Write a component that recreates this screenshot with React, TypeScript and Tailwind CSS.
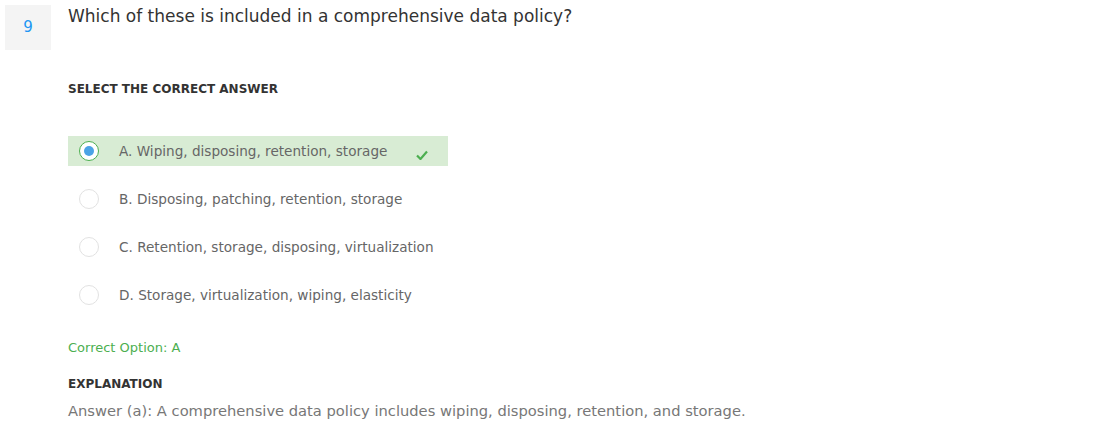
import React from 'react';

const OPTIONS = [
  { key: 'A', text: 'Wiping, disposing, retention, storage', correct: true },
  { key: 'B', text: 'Disposing, patching, retention, storage', correct: false },
  { key: 'C', text: 'Retention, storage, disposing, virtualization', correct: false },
  { key: 'D', text: 'Storage, virtualization, wiping, elasticity', correct: false },
];

export default function App() {
  return (
    <div className="w-[1111px] h-[433px] bg-white flex items-start gap-[17px] pl-[5px] pt-[5px] font-['DejaVu_Sans',sans-serif]">
      <div className="w-[46px] h-[45px] bg-[#f4f4f4] flex items-center justify-center text-[15px] text-[#2196f3] shrink-0">
        9
      </div>
      <div className="flex flex-col">
        <h2 className="text-[17px] leading-[24px] text-[#333] -mt-[1px]">
          Which of these is included in a comprehensive data policy?
        </h2>

        <div className="mt-[53px] text-[12px] font-bold text-[#333] leading-[16px]">SELECT THE CORRECT ANSWER</div>

        <div className="mt-[39px] flex flex-col gap-[18px]">
          {OPTIONS.map(o => (
            <div
              key={o.key}
              className={
                o.correct
                  ? 'w-[380px] h-[30px] bg-[#d8ecd4] flex items-center'
                  : 'w-[380px] h-[30px] flex items-center'
              }
            >
              <div
                className={
                  o.correct
                    ? 'ml-[11px] w-[20px] h-[20px] rounded-full border border-[#4caf50] flex items-center justify-center bg-white'
                    : 'ml-[11px] w-[20px] h-[20px] rounded-full border border-[#e2e2e2] bg-white'
                }
              >
                {o.correct && <div className="w-[10px] h-[10px] rounded-full bg-[#4ba3e6]" />}
              </div>
              <span className="ml-[20px] text-[13.6px] text-[#666]">
                {o.key}. {o.text}
              </span>
              {o.correct && (
                <svg className="ml-[29px] mt-[7px]" width="12" height="10" viewBox="0 0 12 10">
                  <path d="M1 5.5 L4.5 9 L11 1.5" fill="none" stroke="#4caf50" strokeWidth="2.2" />
                </svg>
              )}
            </div>
          ))}
        </div>

        <div className="mt-[30px] text-[13px] text-[#4caf50] leading-[16px]">Correct Option: A</div>
        <div className="mt-[20px] text-[12px] font-bold text-[#333] leading-[16px]">EXPLANATION</div>
        <p className="mt-[9px] text-[14.7px] text-[#777] leading-[20px]">
          Answer (a): A comprehensive data policy includes wiping, disposing, retention, and storage.
        </p>
      </div>
    </div>
  );
}
